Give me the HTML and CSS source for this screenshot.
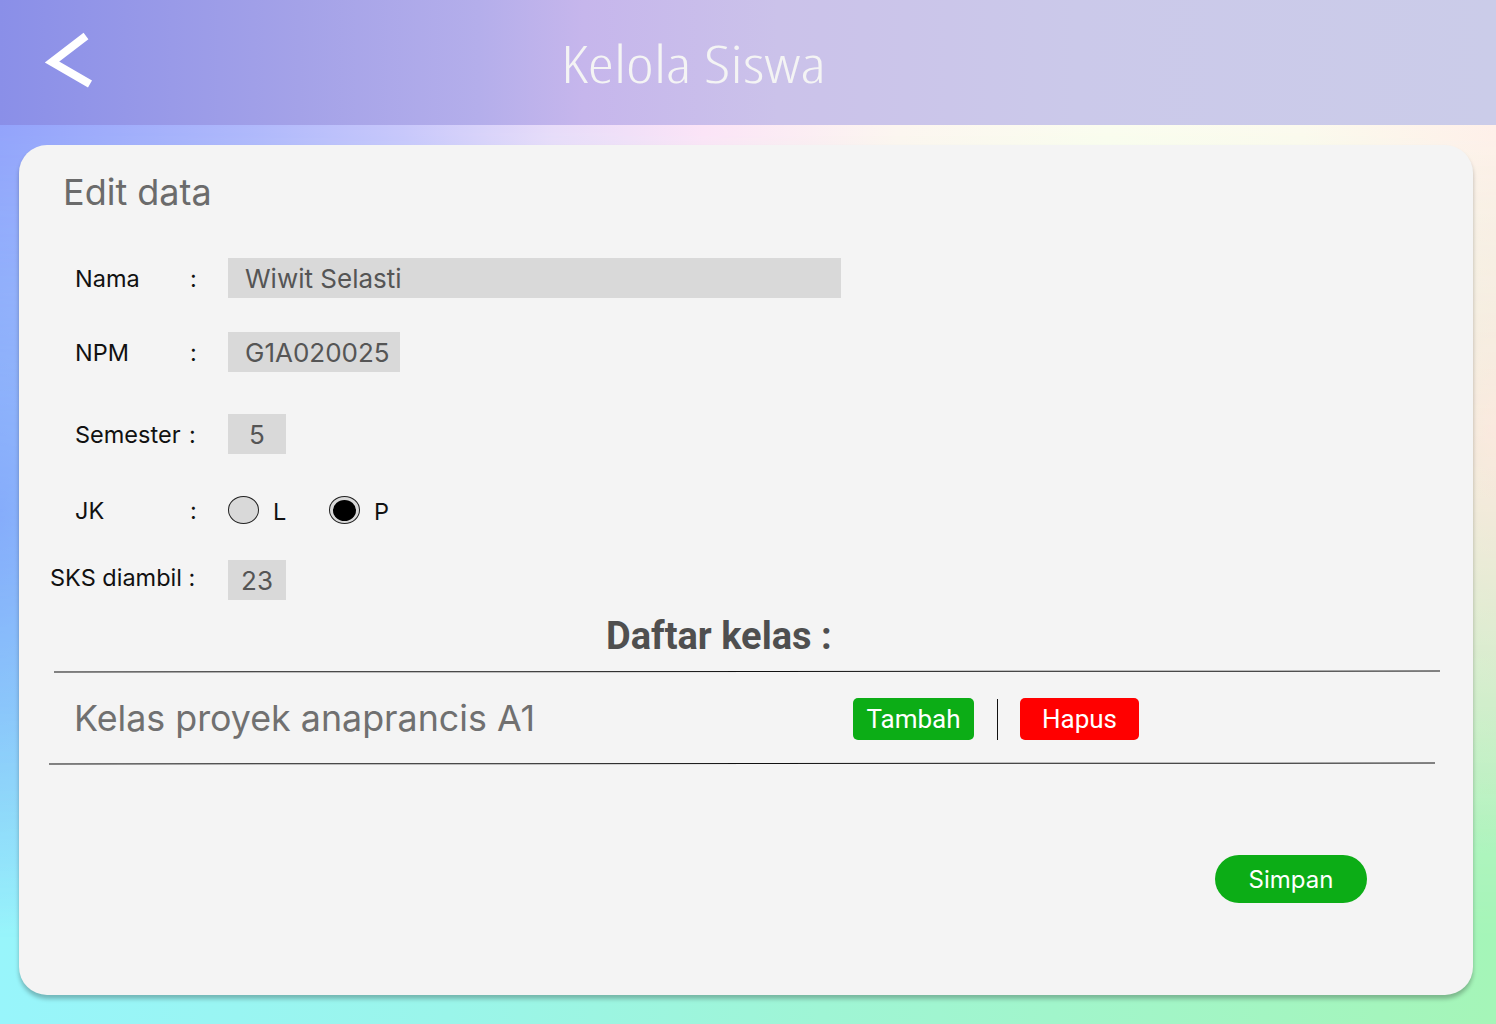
FILE: index.html
```html
<!DOCTYPE html>
<html lang="id">
<head>
<meta charset="utf-8">
<title>Kelola Siswa</title>
<link rel="stylesheet" href="styles.css">
</head>
<body>
<div class="page">
  <header class="topbar">
    <svg class="back" width="60" height="60" viewBox="0 0 60 60" aria-label="Kembali">
      <path d="M46 6 L12 32 L50 54" fill="none" stroke="#ffffff" stroke-width="8" stroke-linejoin="miter" stroke-miterlimit="10"/>
    </svg>
    <h1 class="title">Kelola Siswa</h1>
  </header>

  <main class="wrap">
    <section class="card">
      <h2 class="card-title">Edit data</h2>

      <div class="form">
        <div class="row row-nama">
          <span class="label">Nama</span><span class="colon">:</span>
          <span class="field field-wide">Wiwit Selasti</span>
        </div>
        <div class="row row-npm">
          <span class="label">NPM</span><span class="colon">:</span>
          <span class="field">G1A020025</span>
        </div>
        <div class="row row-sem">
          <span class="label label-full">Semester :</span>
          <span class="field field-small">5</span>
        </div>
        <div class="row row-jk">
          <span class="label">JK</span><span class="colon">:</span>
          <span class="radio"></span><span class="radio-text">L</span>
          <span class="radio radio-on"><span class="dot"></span></span><span class="radio-text">P</span>
        </div>
        <div class="row row-sks">
          <span class="label label-full label-sks">SKS diambil :</span>
          <span class="field field-small">23</span>
        </div>
      </div>

      <h3 class="list-title">Daftar kelas :</h3>
      <div class="rule rule-top"></div>
      <div class="class-row">
        <span class="class-name">Kelas proyek anaprancis A1</span>
        <button class="btn btn-add">Tambah</button>
        <span class="divider"></span>
        <button class="btn btn-del">Hapus</button>
      </div>
      <div class="rule rule-bottom"></div>

      <button class="save">Simpan</button>
    </section>
  </main>
</div>
</body>
</html>
```
FILE: styles.css
```css
* { box-sizing: border-box; }

html, body {
  margin: 0;
  padding: 0;
}

body {
  font-family: "Inter", "Liberation Sans", sans-serif;
}

.page {
  position: relative;
  isolation: isolate;
  width: 1496px;
  height: 1024px;
  overflow: hidden;
  background:
    radial-gradient(ellipse 160px 420px at 0% 50%, rgba(120, 178, 251, 0.95), rgba(120, 178, 251, 0) 100%),
    radial-gradient(ellipse 200px 420px at 100% 42%, rgba(253, 222, 210, 0.9), rgba(253, 222, 210, 0) 100%),
    linear-gradient(90deg, #98f5fb 0%, #9af5ea 30%, #9ff5d5 55%, #a5f5b8 100%);
}

.page::before {
  content: "";
  position: absolute;
  inset: 0;
  z-index: -1;
  background: linear-gradient(90deg, #93a3fb 0%, #b0b8fb 17%, #c8c7fb 27%, #e8dcf9 37%, #fce4f7 47%, #fdf6f0 60%, #fbfdef 74%, #fcfaee 87%, #fff0ea 100%);
  -webkit-mask-image: linear-gradient(to bottom, #000 12%, rgba(0,0,0,0.6) 40%, transparent 92%);
  mask-image: linear-gradient(to bottom, #000 12%, rgba(0,0,0,0.6) 40%, transparent 92%);
}

/* Header */
.topbar {
  height: 125px;
  display: flex;
  align-items: center;
  padding-left: 40px;
  background: linear-gradient(90deg, #8a8fe8 0%, #a4a2e8 20%, #b4aeeb 32%, #c6b6ec 39%, #cbc2ea 52%, #cbc9ea 72%, #cbcce9 100%);
}

.back {
  display: block;
  flex: 0 0 auto;
  margin-top: -5px;
}

.title {
  margin: 0 0 0 461px;
  font-family: "Open Sans", "DejaVu Sans", sans-serif;
  font-stretch: 75%;
  font-weight: 330;
  font-size: 51px;
  line-height: 60px;
  color: #f4f4f4;
  letter-spacing: 0;
  transform: scaleX(1.3);
  transform-origin: left center;
}

/* Card */
.wrap {
  padding: 20px 23px 0 19px;
}

.card {
  height: 850px;
  background: #f4f4f4;
  border-radius: 28px;
  box-shadow: 0 4px 4px rgba(0, 0, 0, 0.25);
  padding-top: 27px;
  display: flex;
  flex-direction: column;
}

.card-title {
  margin: 0 0 0 44px;
  font-weight: 400;
  font-size: 36px;
  line-height: 40px;
  color: #6b6b6b;
}

.form {
  display: flex;
  flex-direction: column;
  margin-top: 46px;
}

.row {
  display: flex;
  align-items: center;
  height: 40px;
  padding-left: 56px;
  font-size: 23.5px;
  color: #111111;
}

.row-npm { margin-top: 34px; }
.row-sem { margin-top: 42px; }
.row-jk  { margin-top: 36px; }
.row-sks { margin-top: 30px; }

.label {
  width: 115px;
  flex: 0 0 auto;
}

.colon {
  width: 38px;
  flex: 0 0 auto;
}

.label-full {
  width: 153px;
  word-spacing: 2px;
}

.label-sks {
  width: 178px;
  margin-left: -25px;
  position: relative;
  top: -3px;
  word-spacing: 0;
}

.field {
  height: 40px;
  display: flex;
  align-items: center;
  padding: 0 10px 0 17px;
  background: #d9d9d9;
  color: #555555;
  font-size: 26px;
}

.field-wide {
  width: 613px;
}

.field-small {
  width: 58px;
  padding: 0;
  justify-content: center;
}

.radio {
  width: 31px;
  height: 28px;
  border: 1px solid #222222;
  border-radius: 50%;
  background: #d9d9d9;
  display: flex;
  align-items: center;
  justify-content: center;
  flex: 0 0 auto;
}

.dot {
  width: 23px;
  height: 21px;
  border-radius: 50%;
  background: #000000;
}

.radio-text {
  margin-left: 14px;
  width: 56px;
  padding-top: 3px;
}

/* Class list */
.list-title {
  margin: 15px 0 0 587px;
  font-family: "Roboto", "Liberation Sans", sans-serif;
  font-weight: 700;
  font-size: 38px;
  line-height: 42px;
  color: #4f4f4f;
}

.rule {
  height: 1px;
  background: #111111;
  transform: rotate(-0.04deg);
}

.rule-top {
  margin: 14px 33px 0 35px;
}

.rule-bottom {
  margin: 0 38px 0 30px;
}

.class-row {
  height: 91px;
  display: flex;
  align-items: center;
  padding-left: 55px;
  padding-top: 3px;
}

.class-name {
  width: 779px;
  flex: 0 0 auto;
  font-size: 35.8px;
  color: #707070;
  margin-top: -3px;
}

.btn {
  height: 42px;
  border: 0;
  border-radius: 5px;
  color: #ffffff;
  font-family: "Roboto", "Liberation Sans", sans-serif;
  font-size: 26px;
  padding: 0;
  display: flex;
  align-items: center;
  justify-content: center;
}

.btn-add {
  width: 121px;
  background: #0cad16;
}

.btn-del {
  width: 119px;
  background: #ff0000;
}

.divider {
  width: 1px;
  height: 41px;
  background: #111111;
  margin: 0 22px 0 23px;
}

.save {
  align-self: flex-end;
  margin: 91px 106px 0 0;
  width: 152px;
  height: 48px;
  border: 0;
  border-radius: 24px;
  background: #0cad16;
  color: #ffffff;
  font-family: "Inter", "Liberation Sans", sans-serif;
  font-size: 24px;
  padding: 0;
}
```
